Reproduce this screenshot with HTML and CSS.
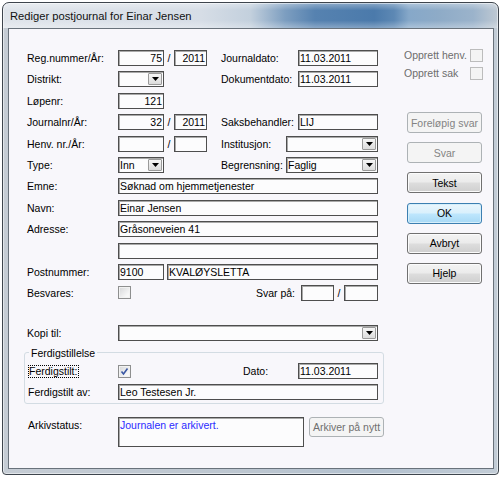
FILE: index.html
```html
<!DOCTYPE html>
<html lang="no">
<head>
<meta charset="utf-8">
<title>Rediger postjournal</title>
<link rel="stylesheet" href="styles.css">
</head>
<body>
<div class="window">
  <div class="titlebar"><span class="title">Rediger postjournal for Einar Jensen</span></div>
  <div class="client">
    <div class="main">
      <div class="row">
        <span class="lbl">Reg.nummer/År:</span>
        <span class="box w46 num">75</span><span class="slash">/</span><span class="box w33 num">2011</span>
        <span class="right"><span class="lbl rl">Journaldato:</span><span class="box w80">11.03.2011</span></span>
      </div>
      <div class="row">
        <span class="lbl">Distrikt:</span>
        <span class="box combo w46"><span class="val"></span><span class="drop"><svg width="7" height="4" viewBox="0 0 7 4"><path d="M0 0H7L3.5 4Z"/></svg></span></span>
        <span class="right"><span class="lbl rl">Dokumentdato:</span><span class="box w80">11.03.2011</span></span>
      </div>
      <div class="row">
        <span class="lbl">Løpenr:</span>
        <span class="box w46 num">121</span>
      </div>
      <div class="row">
        <span class="lbl">Journalnr/År:</span>
        <span class="box w46 num">32</span><span class="slash">/</span><span class="box w33 num">2011</span>
        <span class="right"><span class="lbl rl">Saksbehandler:</span><span class="box w80">LIJ</span></span>
      </div>
      <div class="row">
        <span class="lbl">Henv. nr./År:</span>
        <span class="box w46 num"></span><span class="slash">/</span><span class="box w33 num"></span>
        <span class="right"><span class="lbl rs">Institusjon:</span><span class="box combo w92"><span class="val"></span><span class="drop"><svg width="7" height="4" viewBox="0 0 7 4"><path d="M0 0H7L3.5 4Z"/></svg></span></span></span>
      </div>
      <div class="row">
        <span class="lbl">Type:</span>
        <span class="box combo w46"><span class="val">Inn</span><span class="drop"><svg width="7" height="4" viewBox="0 0 7 4"><path d="M0 0H7L3.5 4Z"/></svg></span></span>
        <span class="right"><span class="lbl rs">Begrensning:</span><span class="box combo w92"><span class="val">Faglig</span><span class="drop"><svg width="7" height="4" viewBox="0 0 7 4"><path d="M0 0H7L3.5 4Z"/></svg></span></span></span>
      </div>
      <div class="row">
        <span class="lbl">Emne:</span>
        <span class="box w260">Søknad om hjemmetjenester</span>
      </div>
      <div class="row">
        <span class="lbl">Navn:</span>
        <span class="box w260">Einar Jensen</span>
      </div>
      <div class="row">
        <span class="lbl">Adresse:</span>
        <span class="box w260">Gråsoneveien 41</span>
      </div>
      <div class="row">
        <span class="lbl"></span>
        <span class="box w260"></span>
      </div>
      <div class="row">
        <span class="lbl">Postnummer:</span>
        <span class="box w46">9100</span><span class="box w211 gap3">KVALØYSLETTA</span>
      </div>
      <div class="row">
        <span class="lbl">Besvares:</span>
        <span class="chk mt1"></span>
        <span class="right"><span class="lbl svar">Svar på:</span><span class="box w33"></span><span class="slash">/</span><span class="box w34"></span></span>
      </div>
      <div class="row kopi">
        <span class="lbl">Kopi til:</span>
        <span class="box combo w260"><span class="val"></span><span class="drop"><svg width="7" height="4" viewBox="0 0 7 4"><path d="M0 0H7L3.5 4Z"/></svg></span></span>
      </div>
      <fieldset class="group">
        <legend>Ferdigstillelse</legend>
        <div class="row grow">
          <span class="lbl gl"><span class="focus">Ferdigstilt:</span></span>
          <span class="chk mt2"><svg width="11" height="11" viewBox="0 0 11 11"><path d="M2.5 5.5L4.5 8L8.5 2.5" fill="none" stroke="#3b58a4" stroke-width="1.6"/></svg></span>
          <span class="right"><span class="lbl dato">Dato:</span><span class="box w80">11.03.2011</span></span>
        </div>
        <div class="row grow">
          <span class="lbl gl">Ferdigstilt av:</span>
          <span class="box w260">Leo Testesen Jr.</span>
        </div>
      </fieldset>
      <div class="arkiv">
        <span class="lbl gl">Arkivstatus:</span>
        <span class="box status">Journalen er arkivert.</span>
        <button class="btn small" disabled>Arkiver på nytt</button>
      </div>
    </div>
    <div class="side">
      <div class="chkrow"><span>Opprett henv.</span><span class="chk dis"></span></div>
      <div class="chkrow"><span>Opprett sak</span><span class="chk dis"></span></div>
      <div class="buttons">
        <button class="btn" disabled>Foreløpig svar</button>
        <button class="btn" disabled>Svar</button>
        <button class="btn">Tekst</button>
        <button class="btn ok">OK</button>
        <button class="btn">Avbryt</button>
        <button class="btn">Hjelp</button>
      </div>
    </div>
  </div>
</div>
</body>
</html>
```

FILE: styles.css
```css
html, body {
  margin: 0;
  padding: 0;
  background: #ffffff;
}
body {
  font-family: "Liberation Sans", Arial, sans-serif;
  font-size: 10.5px;
  color: #000;
}
.window {
  box-sizing: border-box;
  width: 497px;
  height: 473px;
  margin: 2px 0 0 2px;
  border: 1px solid #3e454d;
  border-radius: 7px 7px 4px 4px;
  padding: 0 4px 5px 5px;
  display: flex;
  flex-direction: column;
  background:
    linear-gradient(to bottom, rgba(255,255,255,0.35) 0, rgba(255,255,255,0) 30%, rgba(255,255,255,0) 70%, rgba(255,255,255,0.3) 100%) 0 0 / 100% 25px no-repeat,
    linear-gradient(to right, #dfe4ea 0%, #d6dde6 40%, #c3d0dd 50%, #7d9ec0 57%, #5682b0 63%, #4b7aab 75%, #5d88b4 79%, #86a8c9 82%, #8eabc7 88%, #9bb3cb 95%, #bfc9d3 100%) 0 0 / 100% 25px no-repeat,
    linear-gradient(to right, #c5ccd4, #bcc6d0 50%, #b3c1cf 75%, #c2ccd6);
  box-shadow: inset 0 0 0 1px rgba(255,255,255,0.5);
}
.titlebar {
  height: 25px;
  box-sizing: border-box;
  padding: 2px 0 0 2px;
  line-height: 23px;
  flex: none;
}
.title {
  font-size: 11.2px;
  color: #111;
}
.client {
  flex: 1;
  display: flex;
  border: 1px solid #69727b;
  background: #f8f7fb;
}
.main {
  flex: none;
  width: 386px;
  box-sizing: border-box;
  padding: 21px 0 0 18px;
}
.row {
  display: flex;
  align-items: flex-start;
  width: 351px;
  height: 21.4px;
}
.lbl {
  flex: none;
  width: 91px;
  line-height: 16px;
  white-space: nowrap;
}
.rl { width: 77px; }
.rs { width: 65px; }
.right {
  margin-left: auto;
  display: flex;
  align-items: flex-start;
}
.box {
  flex: none;
  box-sizing: border-box;
  height: 16px;
  border: 1px solid #4e4e4e;
  box-shadow: inset 1px 1px 0 #a9a9a9;
  background: #fcfcfd;
  line-height: 14px;
  padding: 0 1px;
  white-space: nowrap;
  overflow: hidden;
}
.num { text-align: right; }
.w33 { width: 33px; }
.w34 { width: 34px; }
.w46 { width: 46px; }
.w80 { width: 80px; }
.w92 { width: 92px; }
.w211 { width: 211px; }
.w260 { width: 260px; }
.gap3 { margin-left: 3px; }
.slash {
  flex: none;
  width: 10px;
  text-align: center;
  line-height: 16px;
}
.combo {
  display: flex;
  padding: 0;
}
.combo .val {
  flex: 1;
  padding-left: 1px;
  overflow: hidden;
}
.combo .drop {
  flex: none;
  width: 14px;
  height: 12px;
  margin: 1px 1px 0 0;
  box-sizing: border-box;
  border: 1px solid #9a9a9a;
  border-radius: 1px;
  background: linear-gradient(#f6f6f6, #dcdcdc);
  display: flex;
  align-items: center;
  justify-content: center;
}
.combo .drop svg { display: block; fill: #000; }
.chk {
  flex: none;
  width: 13px;
  height: 13px;
  box-sizing: border-box;
  border: 1px solid #8e8f8f;
  background: linear-gradient(135deg, #d5d6d8, #f7f7f7 75%);
  box-shadow: inset 0 0 0 1px #f2f2f2;
  display: flex;
  align-items: center;
  justify-content: center;
}
.chk svg { display: block; }
.chk.dis {
  border-color: #bcbcbc;
  background: #f4f4f4;
  box-shadow: none;
}
.mt1 { margin-top: 1px; }
.mt2 { margin-top: 2px; }
.svar { width: auto; margin-right: 6px; }
.kopi { margin-top: 18.2px; height: 16px; }
.group {
  box-sizing: border-box;
  width: 360px;
  margin: 5px 0 0 -3px;
  padding: 3px 4px 3px 3px;
  border: 1px solid #d3dce3;
  border-radius: 3px;
  min-width: 0;
}
.group legend {
  padding: 0 2px;
  margin-left: 1px;
  line-height: 14px;
  font-size: 10.5px;
}
.grow { width: 350px; height: 21px; }
.grow + .grow { height: 16px; }
.gl { width: 90px; }
.focus {
  display: inline-block;
  margin-top: 2px;
  border: 1px dotted #000;
  line-height: 11px;
  padding: 0 1px 0 0;
}
.dato { width: 55px; }
.arkiv {
  display: flex;
  align-items: flex-start;
  margin: 13px 0 0 1px;
}
.status {
  width: 186px;
  height: 30px;
  color: #2b2bff;
}
.btn {
  box-sizing: border-box;
  width: 75px;
  height: 21px;
  padding: 0;
  margin: 0;
  border: 1px solid #707070;
  border-radius: 3px;
  background: linear-gradient(#f3f3f3 0%, #ebebeb 48%, #dddddd 52%, #cfcfcf 100%);
  box-shadow: inset 0 0 0 1px #fbfbfb;
  font-family: "Liberation Sans", Arial, sans-serif;
  font-size: 10.5px;
  color: #000;
  white-space: nowrap;
}
.btn.ok {
  border-color: #3c7fb1;
  background: linear-gradient(#eaf6fd 0%, #d9f0fc 48%, #bee6fd 52%, #a7d9f5 100%);
  box-shadow: inset 0 0 0 1px #d6effb;
}
.btn:disabled {
  border-color: #adb2b5;
  background: #f4f4f4;
  box-shadow: none;
  color: #838383;
}
.btn.small {
  height: 20px;
  margin-left: 5px;
  color: #6f6f6f;
}
.side {
  flex: 1;
  box-sizing: border-box;
  padding: 20px 0 0 9px;
}
.chkrow {
  display: flex;
  align-items: center;
  justify-content: space-between;
  width: 79px;
  height: 13px;
  margin-bottom: 5px;
  line-height: 13px;
  color: #6d6d6d;
  white-space: nowrap;
}
.buttons {
  display: flex;
  flex-direction: column;
  gap: 9.2px;
  margin: 32px 0 0 3px;
}
```
